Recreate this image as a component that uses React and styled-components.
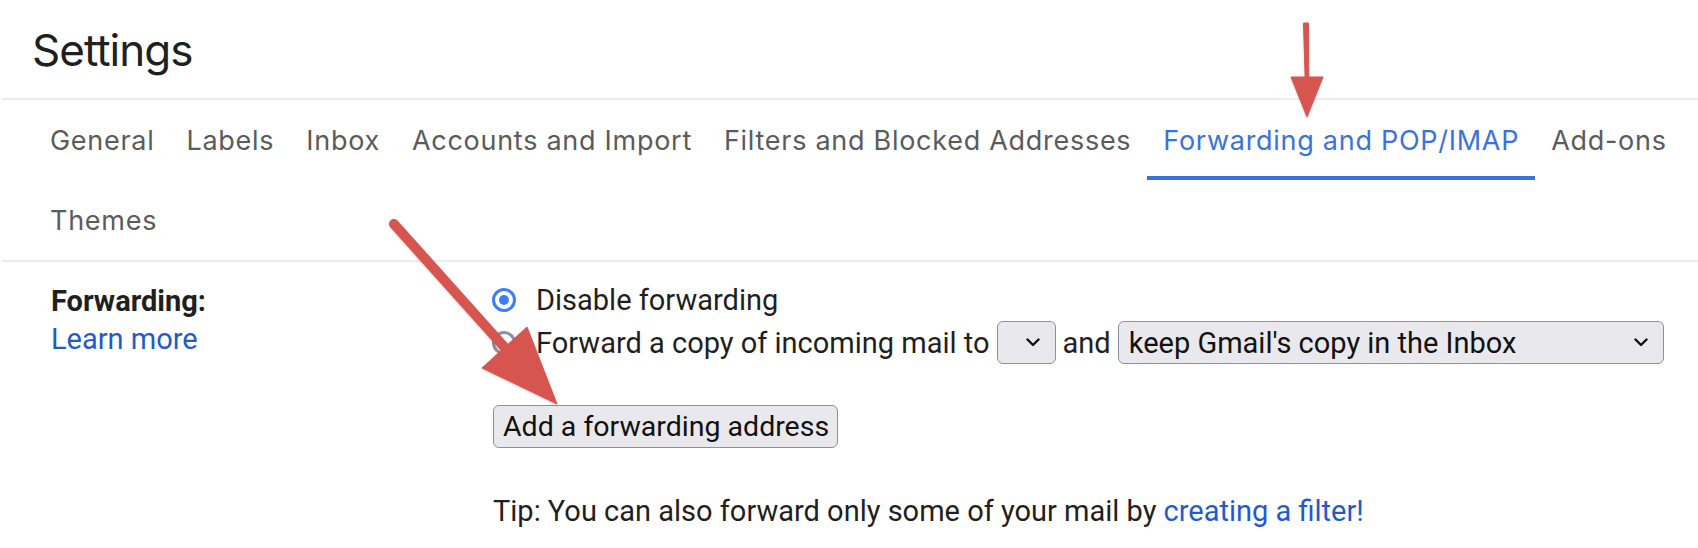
import React from "react";
import styled, { createGlobalStyle } from "styled-components";

const GlobalStyle = createGlobalStyle`
  html, body {
    margin: 0;
    padding: 0;
    background: #ffffff;
  }
  body {
    font-family: Roboto, "Liberation Sans", Arial, sans-serif;
    color: #1f1f1f;
  }
`;

const tabs = [
  "General",
  "Labels",
  "Inbox",
  "Accounts and Import",
  "Filters and Blocked Addresses",
  "Forwarding and POP/IMAP",
  "Add-ons",
  "Themes",
];

const ACTIVE_TAB = "Forwarding and POP/IMAP";

export default function App() {
  return (
    <Page>
      <GlobalStyle />
      <Header>
        <Title>Settings</Title>
      </Header>

      <TabBar>
        {tabs.map((t) => (
          <Tab key={t} active={t === ACTIVE_TAB}>
            {t}
          </Tab>
        ))}
      </TabBar>

      <Section>
        <LabelCol>
          <Label>Forwarding:</Label>
          <Link href="#">Learn more</Link>
        </LabelCol>

        <OptionsCol>
          <OptionRow>
            <Radio checked />
            <span>Disable forwarding</span>
          </OptionRow>
          <OptionRow tall>
            <Radio />
            <span>Forward a copy of incoming mail to</span>
            <SelectBox width={59}>
              <SelectText />
              <Chevron />
            </SelectBox>
            <span>and</span>
            <SelectBox width={546}>
              <SelectText>keep Gmail's copy in the Inbox</SelectText>
              <Chevron />
            </SelectBox>
          </OptionRow>

          <Button type="button">Add a forwarding address</Button>

          <Tip>
            Tip: You can also forward only some of your mail by{" "}
            <Link href="#">creating a filter!</Link>
          </Tip>
        </OptionsCol>
      </Section>

      {/* annotation arrows drawn over the screenshot */}
      <Overlay width="1698" height="548" viewBox="0 0 1698 548">
        <defs>
          <filter id="sh" x="-20%" y="-20%" width="140%" height="140%">
            <feDropShadow dx="0" dy="1" stdDeviation="1" floodColor="#000" floodOpacity="0.18" />
          </filter>
        </defs>
        <g fill="#d65450" stroke="#d65450" filter="url(#sh)">
          <path d="M1303.5 23 L1308.5 23 L1308.8 80 L1305.2 80 Z" strokeWidth="1" strokeLinejoin="round" />
          <polygon points="1291,77 1323,77 1307,117" strokeWidth="1" strokeLinejoin="round" />
          <line x1="394" y1="224" x2="506" y2="349" strokeWidth="10" strokeLinecap="round" />
          <polygon points="482,368 527,327 557,404" strokeWidth="1" strokeLinejoin="round" />
        </g>
      </Overlay>
    </Page>
  );
}

function Chevron() {
  return (
    <ChevronSvg width="14" height="9" viewBox="0 0 14 9">
      <path d="M1.5 1.5 L7 7 L12.5 1.5" fill="none" stroke="#111" strokeWidth="2.4" strokeLinecap="round" strokeLinejoin="round" />
    </ChevronSvg>
  );
}

const Page = styled.div`
  position: relative;
  width: 1698px;
  height: 548px;
  overflow: hidden;
  background: #fff;
`;

const Header = styled.div`
  height: 98px;
  padding-left: 32px;
  box-sizing: border-box;
`;

const Title = styled.h1`
  margin: 0;
  padding-top: 22px;
  font-family: Inter, Roboto, sans-serif;
  font-weight: 400;
  font-size: 44px;
  line-height: 56px;
  letter-spacing: -1px;
  color: #1f1f1f;
`;

const TabBar = styled.div`
  display: flex;
  flex-wrap: wrap;
  margin-left: 2px;
  padding-left: 32px;
  border-top: 2px solid #ececec;
  border-bottom: 2px solid #ececec;
`;

const Tab = styled.div`
  height: 80px;
  padding: 4px 16px 0;
  display: flex;
  align-items: center;
  font-family: Inter, Roboto, sans-serif;
  font-size: 27px;
  letter-spacing: 0.72px;
  color: ${(p) => (p.active ? "#3a72dc" : "#5b5b5b")};
  box-sizing: border-box;
  border-bottom: 4px solid ${(p) => (p.active ? "#3a72dc" : "transparent")};
  white-space: nowrap;
`;

const Section = styled.div`
  display: grid;
  grid-template-columns: 442px 1fr;
  padding: 17px 0 0 51px;
  font-size: 29px;
`;

const LabelCol = styled.div`
  display: flex;
  flex-direction: column;
  align-items: flex-start;
  padding-top: 3px;
  line-height: 38px;
`;

const Label = styled.div`
  font-weight: 700;
  color: #1f1f1f;
`;

const Link = styled.a`
  color: #1f5bcc;
  text-decoration: none;
`;

const OptionsCol = styled.div`
  display: flex;
  flex-direction: column;
  align-items: flex-start;
  line-height: 42px;
`;

const OptionRow = styled.div`
  display: flex;
  align-items: center;
  height: ${(p) => (p.tall ? "43px" : "42px")};
  gap: 7px;
  white-space: nowrap;
`;

const Radio = styled.span`
  width: 24px;
  height: 24px;
  margin-left: -1px;
  margin-right: 13px;
  border-radius: 50%;
  box-sizing: border-box;
  border: ${(p) => (p.checked ? "3.5px solid #3d7ff3" : "3px solid #8f8f9d")};
  display: flex;
  align-items: center;
  justify-content: center;
  flex-shrink: 0;

  &::after {
    content: "";
    width: 10px;
    height: 10px;
    border-radius: 50%;
    background: ${(p) => (p.checked ? "#3d7ff3" : "transparent")};
  }
`;

const SelectBox = styled.div`
  width: ${(p) => p.width}px;
  height: 43px;
  box-sizing: border-box;
  display: flex;
  align-items: center;
  justify-content: space-between;
  padding: 0 15px 0 10px;
  background: #e9e9ed;
  border: 1.5px solid #8f8f9d;
  border-radius: 6px;
  color: #111;
`;

const SelectText = styled.span`
  font-size: 29px;
`;

const ChevronSvg = styled.svg`
  flex-shrink: 0;
`;

const Button = styled.button`
  margin-top: 41px;
  height: 43px;
  padding: 0 8px 0 9px;
  font-family: Roboto, sans-serif;
  font-size: 28.5px;
  color: #111;
  background: #e9e9ed;
  border: 1.5px solid #8f8f9d;
  border-radius: 6px;
`;

const Tip = styled.div`
  margin-top: 42px;
  color: #1f1f1f;
`;

const Overlay = styled.svg`
  position: absolute;
  left: 0;
  top: 0;
  pointer-events: none;
`;
